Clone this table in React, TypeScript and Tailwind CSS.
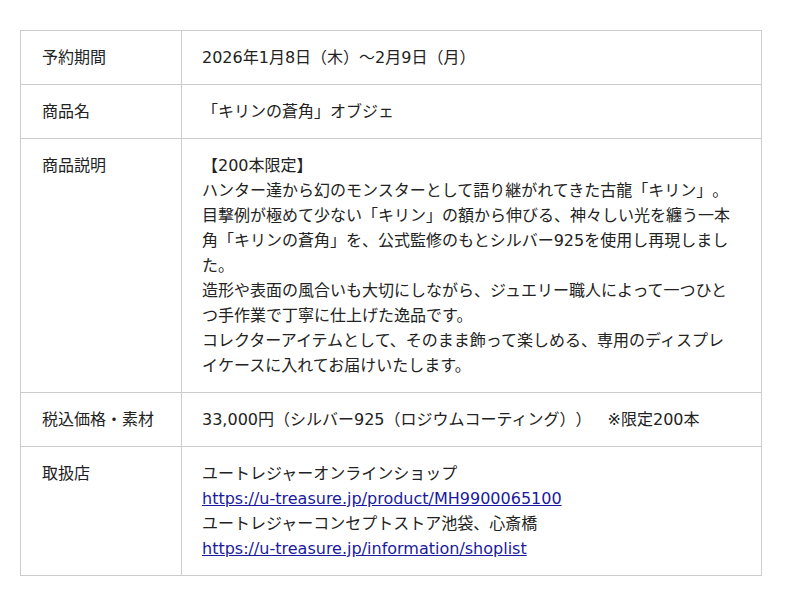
const rows: { label: string; body: React.ReactNode }[] = [
  { label: "予約期間", body: "2026年1月8日（木）〜2月9日（月）" },
  { label: "商品名", body: "「キリンの蒼角」オブジェ" },
  {
    label: "商品説明",
    body: (
      <>
        【200本限定】
        <br />
        ハンター達から幻のモンスターとして語り継がれてきた古龍「キリン」。
        <br />
        目撃例が極めて少ない「キリン」の額から伸びる、神々しい光を纏う一本角「キリンの蒼角」を、公式監修のもとシルバー925を使用し再現しました。
        <br />
        造形や表面の風合いも大切にしながら、ジュエリー職人によって一つひとつ手作業で丁寧に仕上げた逸品です。
        <br />
        コレクターアイテムとして、そのまま飾って楽しめる、専用のディスプレイケースに入れてお届けいたします。
      </>
    ),
  },
  {
    label: "税込価格・素材",
    body: "33,000円（シルバー925（ロジウムコーティング））　※限定200本",
  },
  {
    label: "取扱店",
    body: (
      <>
        ユートレジャーオンラインショップ
        <br />
        <a href="#" className="text-[#1a1a9c] underline">
          https://u-treasure.jp/product/MH9900065100
        </a>
        <br />
        ユートレジャーコンセプトストア池袋、心斎橋
        <br />
        <a href="#" className="text-[#1a1a9c] underline">
          https://u-treasure.jp/information/shoplist
        </a>
      </>
    ),
  },
];

export default function App() {
  return (
    <div
      className="bg-white w-[800px] h-[606px] px-5 pt-[30px] text-[16px] leading-[25px] text-[#222] [text-spacing-trim:space-all]"
      style={{ fontFamily: '"DejaVu Sans", "Noto Sans CJK JP", sans-serif' }}
    >
      <table className="w-[742px] border-collapse table-fixed">
        <colgroup>
          <col className="w-[161px]" />
          <col />
        </colgroup>
        <tbody>
          {rows.map((r) => (
            <tr key={r.label}>
              <td className="border border-[#cccccc] align-top pl-[21px] pr-3 py-[14px]">
                {r.label}
              </td>
              <td className="border border-[#cccccc] align-top pl-5 pr-6 py-[14px] break-all">
                {r.body}
              </td>
            </tr>
          ))}
        </tbody>
      </table>
    </div>
  );
}
